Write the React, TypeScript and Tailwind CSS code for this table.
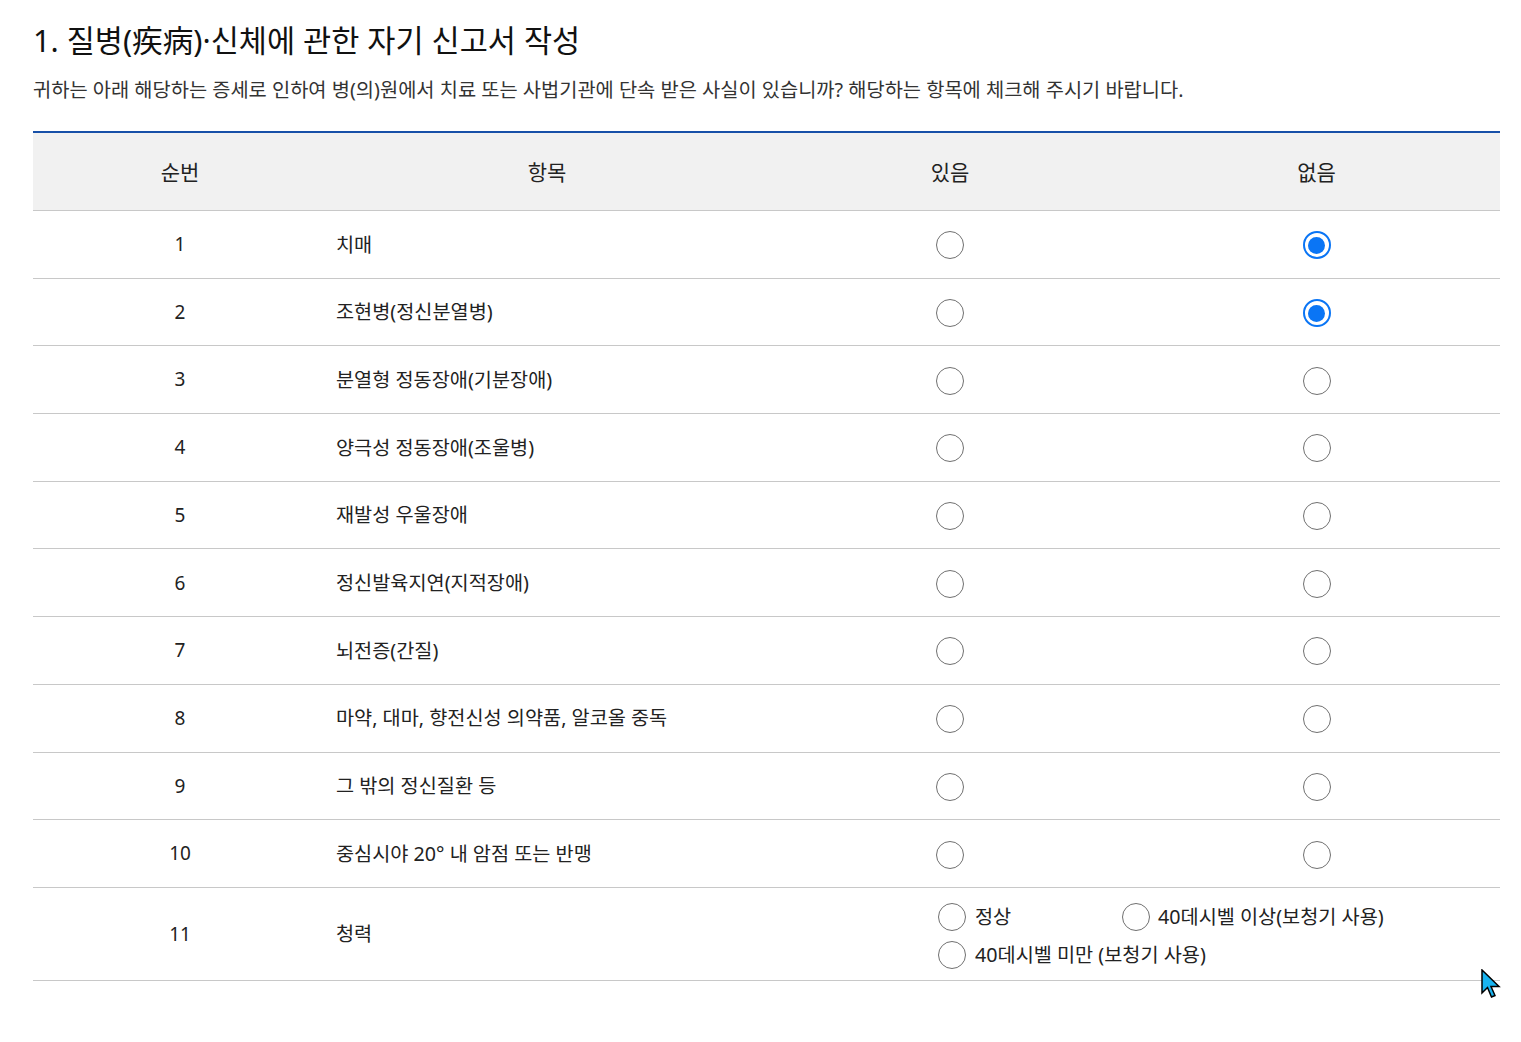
import React from "react";

const KR = { fontFamily: '"Noto Sans", "Noto Sans CJK KR", sans-serif' };

function Radio({ checked = false }: { checked?: boolean }) {
  if (checked) {
    return (
      <span className="inline-flex h-[28px] w-[28px] items-center justify-center rounded-full border-[2px] border-[#0a75f5] bg-white">
        <span className="h-[17px] w-[17px] rounded-full bg-[#0a75f5]" />
      </span>
    );
  }
  return <span className="inline-block h-[28px] w-[28px] rounded-full border-[1.5px] border-[#707070] bg-white" />;
}

const rows: { n: number; label: string; none?: boolean }[] = [
  { n: 1, label: "치매", none: true },
  { n: 2, label: "조현병(정신분열병)", none: true },
  { n: 3, label: "분열형 정동장애(기분장애)" },
  { n: 4, label: "양극성 정동장애(조울병)" },
  { n: 5, label: "재발성 우울장애" },
  { n: 6, label: "정신발육지연(지적장애)" },
  { n: 7, label: "뇌전증(간질)" },
  { n: 8, label: "마약, 대마, 향전신성 의약품, 알코올 중독" },
  { n: 9, label: "그 밖의 정신질환 등" },
  { n: 10, label: "중심시야 20° 내 암점 또는 반맹" },
];

export default function App() {
  return (
    <div className="relative min-h-[1042px] w-[1521px] bg-white text-[#222]" style={KR}>
      <div className="pl-[33px] pr-[21px] pt-[16px]">
        <h1 className="text-[30.6px] leading-[48px] font-normal text-[#111]">
          1. 질병(疾病)·신체에 관한 자기 신고서 작성
        </h1>
        <p className="mt-[1px] text-[19.8px] leading-[50px] text-[#333]">
          귀하는 아래 해당하는 증세로 인하여 병(의)원에서 치료 또는 사법기관에 단속 받은 사실이 있습니까? 해당하는 항목에 체크해 주시기 바랍니다.
        </p>
        <div className="mt-[16px] border-t-[2px] border-[#1750a8]">
          <div className="grid h-[78px] grid-cols-[294px_440px_366px_367px] items-center border-b border-[#c8c8c8] bg-[#f1f1f1] pt-[3px] text-[21px] text-[#222]">
            <div className="text-center">순번</div>
            <div className="text-center">항목</div>
            <div className="text-center">있음</div>
            <div className="text-center">없음</div>
          </div>
          {rows.map((r) => (
            <div
              key={r.n}
              className="grid h-[67.7px] grid-cols-[294px_440px_366px_367px] items-center border-b border-[#c8c8c8] text-[19.7px]"
            >
              <div className="text-center text-[19px] text-[#222]">{r.n}</div>
              <div className="pl-[9px] text-[#222]">{r.label}</div>
              <div className="flex justify-center pt-[2px]">
                <Radio />
              </div>
              <div className="flex justify-center pt-[2px]">
                <Radio checked={r.none} />
              </div>
            </div>
          ))}
          <div className="grid h-[93px] grid-cols-[294px_440px_733px] items-center border-b border-[#c8c8c8] text-[19.7px]">
            <div className="text-center text-[19px]">11</div>
            <div className="pl-[9px]">청력</div>
            <div className="flex flex-col gap-[8px] pl-[171px] pt-[4px]">
              <div className="flex items-center">
                <label className="flex w-[184px] items-center gap-[9px]">
                  <Radio />
                  <span>정상</span>
                </label>
                <label className="flex items-center gap-[8px]">
                  <Radio />
                  <span>40데시벨 이상(보청기 사용)</span>
                </label>
              </div>
              <label className="flex items-center gap-[9px]">
                <Radio />
                <span>40데시벨 미만 (보청기 사용)</span>
              </label>
            </div>
          </div>
        </div>
      </div>
      <svg className="absolute left-[1481px] top-[969px]" width="22" height="32" viewBox="0 0 22 32">
        <path d="M1 1 L1 24 L6.5 18.5 L10.5 28 L14 26.5 L10 17.5 L18 17.5 Z" fill="#19b4f0" stroke="#000" strokeWidth="1.5" strokeLinejoin="miter" />
      </svg>
    </div>
  );
}
